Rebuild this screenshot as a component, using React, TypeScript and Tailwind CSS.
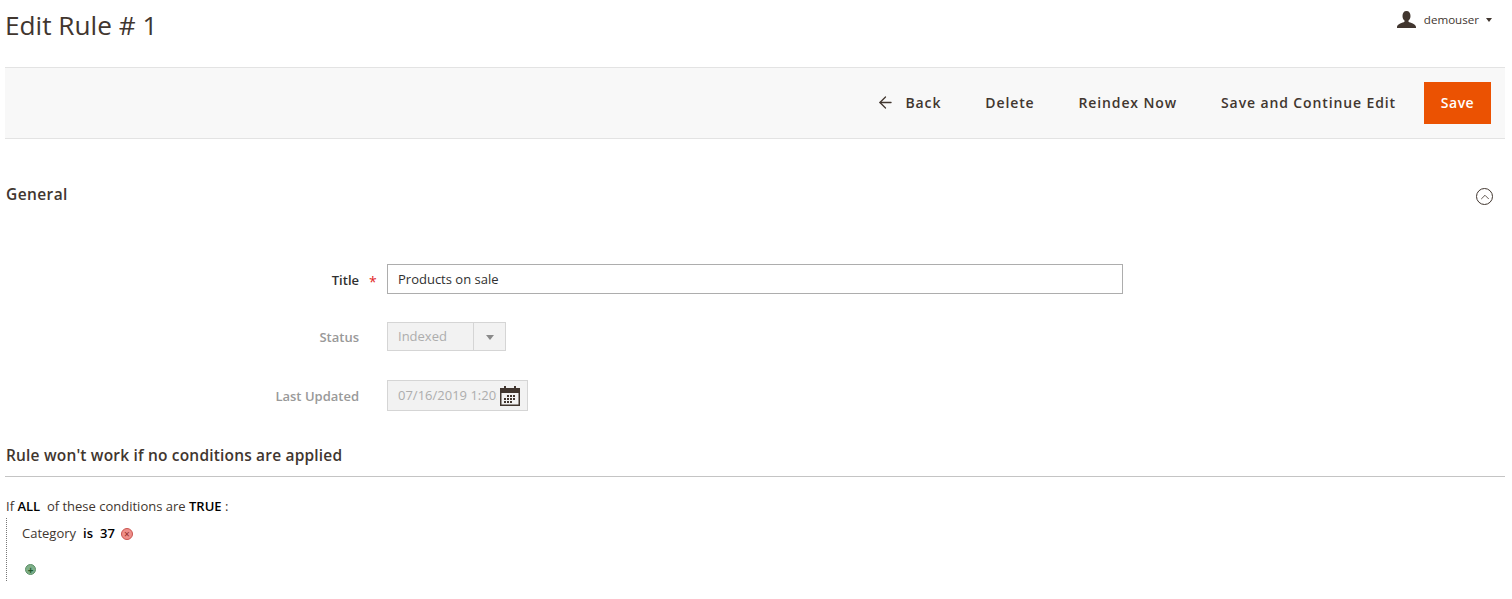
import { ArrowLeft, ChevronUp } from 'lucide-react';

function Field({ label, required, muted, children }: { label: string; required?: boolean; muted?: boolean; children: React.ReactNode }) {
    return (
        <div className="flex items-center">
            <label className={`w-[354px] pt-[3px] text-right text-[13px] font-semibold ${muted ? 'text-[#999999]' : 'text-[#303030]'}`}>
                {label}
            </label>
            <span className="w-[28px] pl-[10px] pt-[4px] text-[14px] text-[#e22626]">{required ? '*' : ''}</span>
            {children}
        </div>
    );
}

function UserIcon() {
    return (
        <svg width="19" height="17" viewBox="0 0 19 17" className="text-[#41362f]">
            <path
                d="M9.5 0C6.8 0 5.5 2 5.5 5c0 2 .8 3.6 2 4.5v1.2c-1.5 1-7.5 2-7.5 5.3v1h19v-1c0-3.3-6-4.3-7.5-5.3V9.5c1.2-.9 2-2.5 2-4.5 0-3-1.3-5-4-5z"
                fill="currentColor"
            />
        </svg>
    );
}

function CalendarIcon() {
    return (
        <svg width="20" height="20" viewBox="0 0 20 20" className="text-[#41362f]">
            <rect x="0" y="2" width="20" height="18" fill="currentColor" />
            <rect x="1.5" y="7" width="17" height="11.5" fill="#f2f2f2" />
            <rect x="4" y="0" width="2" height="5" fill="currentColor" />
            <rect x="14" y="0" width="2" height="5" fill="currentColor" />
            <path d="M7 9h2v2H7zM10 9h2v2h-2zM13 9h2v2h-2zM4 12h2v2H4zM7 12h2v2H7zM10 12h2v2h-2zM13 12h2v2h-2zM4 15h2v2H4zM7 15h2v2H7zM10 15h2v2h-2z" fill="currentColor" />
        </svg>
    );
}

export default function App() {
    return (
        <div className="h-[599px] overflow-hidden bg-white pl-[5px] pr-[7px] font-['Open_Sans',sans-serif] text-[#303030]">
            <header className="flex h-[67px] items-start justify-between">
                <h1 className="pt-[8px] text-[26.2px] leading-[34px] font-normal text-[#41362f]">Edit Rule # 1</h1>
                <div className="mr-[13px] flex items-center pt-[11px] text-[#41362f]">
                    <UserIcon />
                    <span className="ml-[8px] text-[11.6px]">demouser</span>
                    <span className="ml-[7px] mt-px h-0 w-0 border-x-[3.5px] border-t-[4px] border-x-transparent border-t-[#41362f]" />
                </div>
            </header>

            <div className="flex h-[72px] items-center justify-end gap-[44px] border-y border-[#e3e3e3] bg-[#f8f8f8] pr-[14px] text-[14px] font-semibold tracking-[0.88px] text-[#41362f]">
                <span className="flex items-center gap-[10px] pb-[2px]">
                    <ArrowLeft className="h-[19px] w-[19px]" strokeWidth={1.6} />
                    Back
                </span>
                <span className="pb-[2px]">Delete</span>
                <span className="pb-[2px]">Reindex Now</span>
                <div className="flex items-center gap-[28px]">
                    <span className="pb-[2px]">Save and Continue Edit</span>
                    <span className="flex h-[42px] w-[67px] items-center justify-center bg-[#eb5202] pb-[2px] font-semibold tracking-[0.5px] text-white">Save</span>
                </div>
            </div>

            <section className="flex items-start justify-between pt-[43px]">
                <h2 className="pl-px text-[15.5px] leading-[24px] font-semibold tracking-[0.4px] text-[#41362f]">General</h2>
                <span className="mr-[12px] mt-[6px] flex h-[17px] w-[17px] items-center justify-center rounded-full border border-[#41362f] text-[#41362f]">
                    <ChevronUp className="h-[14px] w-[14px]" strokeWidth={1.4} />
                </span>
            </section>

            <form className="mt-[58px] flex flex-col">
                <Field label="Title" required>
                    <div className="flex h-[30px] w-[736px] items-center border border-[#adadad] pl-[10px] pt-px text-[13px] text-[#303030]">Products on sale</div>
                </Field>
                <div className="mt-[28px]">
                    <Field label="Status" muted>
                        <div className="flex h-[29px] w-[119px] items-center border border-[#d5d5d5] bg-[#f2f2f2] text-[13px] text-[#adadad]">
                            <span className="flex-1 pl-[10px]">Indexed</span>
                            <span className="flex h-full w-[32px] items-center justify-center border-l border-[#d5d5d5]">
                                <span className="mt-px h-0 w-0 border-x-[4px] border-t-[5px] border-x-transparent border-t-[#8a8a8a]" />
                            </span>
                        </div>
                    </Field>
                </div>
                <div className="mt-[29px]">
                    <Field label="Last Updated" muted>
                        <div className="flex h-[31px] w-[141px] items-center justify-between border border-[#d5d5d5] bg-[#f2f2f2] pl-[10px] pr-[7px] text-[13px] text-[#adadad]">
                            <span className="w-[99px] overflow-hidden whitespace-nowrap">07/16/2019 1:20:48 PM</span>
                            <CalendarIcon />
                        </div>
                    </Field>
                </div>
            </form>

            <h3 className="mt-[32px] border-b border-[#c4c4c4] pb-[9px] pl-px text-[15.5px] leading-[24px] font-semibold tracking-[0.18px] text-[#41362f]">
                Rule won't work if no conditions are applied
            </h3>

            <div className="pl-px pt-[21px] text-[13px] leading-[17px] text-[#41362f]">
                <p>
                    If <b className="font-semibold text-black">ALL</b>&nbsp; of these conditions are <b className="font-semibold text-black">TRUE</b> :
                </p>
                <div className="mt-[3px] h-[63px] border-l border-dotted border-[#777777] pl-[15px]">
                    <div className="flex items-center pt-[7px]">
                        <span>Category</span>
                        <b className="ml-[7px] font-semibold text-black">is</b>
                        <b className="ml-[7px] font-semibold text-black">37</b>
                        <span className="ml-[6px] mt-px flex h-[12px] w-[12px] items-center justify-center rounded-full border border-[#c9544f] bg-[#ef8f8a] text-[10px] leading-none text-[#8e2a26]">×</span>
                    </div>
                    <span className="ml-[3px] mt-[22px] flex h-[11px] w-[11px] items-center justify-center rounded-full border border-[#5d9068] bg-[#7fb08a] text-[10px] font-bold leading-none text-[#1f5a2c]">+</span>
                </div>
            </div>
        </div>
    );
}
